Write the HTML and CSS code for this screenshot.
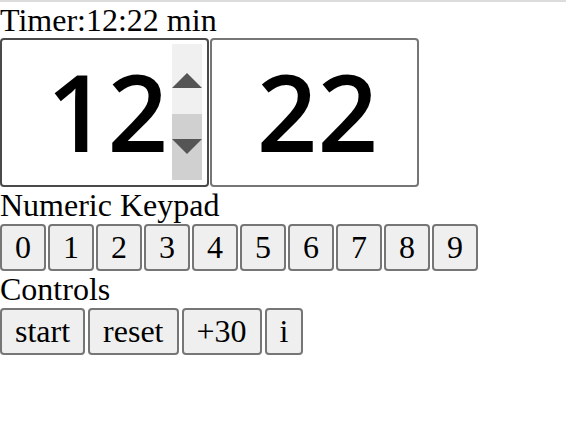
FILE: index.html
```html
<!DOCTYPE html>
<html lang="en">
<head>
<meta charset="utf-8">
<title>Timer</title>
<link rel="stylesheet" href="styles.css">
</head>
<body>
<div class="topline"></div>
<div class="label timer-label">Timer:12:22 min</div>
<div class="fields">
  <div class="field focused">
    <input class="value" type="text" value="12" aria-label="minutes">
    <div class="spin">
      <div class="spin-half up"><span class="tri-up"></span></div>
      <div class="spin-half down"><span class="tri-down"></span></div>
    </div>
  </div>
  <div class="field">
    <input class="value" type="text" value="22" aria-label="seconds">
    <div class="spin hidden"></div>
  </div>
</div>
<div class="label">Numeric Keypad</div>
<div class="row">
  <button class="btn">0</button>
  <button class="btn">1</button>
  <button class="btn">2</button>
  <button class="btn">3</button>
  <button class="btn">4</button>
  <button class="btn">5</button>
  <button class="btn">6</button>
  <button class="btn">7</button>
  <button class="btn">8</button>
  <button class="btn">9</button>
</div>
<div class="label">Controls</div>
<div class="row controls">
  <button class="btn">start</button>
  <button class="btn">reset</button>
  <button class="btn">+30</button>
  <button class="btn">i</button>
</div>
</body>
</html>
```
FILE: styles.css
```css
html, body {
  margin: 0;
  padding: 0;
  background: #ffffff;
}
body {
  font-family: "Liberation Serif", "Times New Roman", serif;
  font-size: 32px;
  color: #000;
}
.topline {
  height: 2px;
  background: #dcdcdc;
}
.label {
  height: 37px;
  line-height: 37px;
  white-space: nowrap;
}
.timer-label {
  height: 36px;
  line-height: 36px;
}
.fields {
  display: flex;
  gap: 1px;
}
.field {
  box-sizing: border-box;
  width: 209px;
  height: 149px;
  border: 2px solid #767676;
  border-radius: 4px;
  display: flex;
  align-items: stretch;
  padding: 4px 5px 5px 0;
  background: #fff;
}
.field.focused {
  border-color: #4a4a4a;
}
.value {
  flex: 1;
  min-width: 0;
  border: 0;
  outline: none;
  padding: 0 4px 0 0;
  margin: 0;
  background: transparent;
  font-family: "Open Sans", "Liberation Sans", sans-serif;
  font-weight: 600;
  font-size: 106px;
  line-height: 134px;
  height: 134px;
  text-align: right;
  color: #000;
}
.spin {
  width: 30px;
  display: flex;
  flex-direction: column;
}
.spin.hidden {
  visibility: hidden;
}
.spin-half {
  flex: 1;
  display: flex;
  justify-content: center;
}
.spin-half.up {
  background: #f0f0f0;
  align-items: flex-start;
  padding-top: 29px;
}
.spin-half.down {
  background: #d0d0d0;
  align-items: flex-start;
  padding-top: 25px;
}
.tri-up {
  width: 0;
  height: 0;
  border-left: 15px solid transparent;
  border-right: 15px solid transparent;
  border-bottom: 15px solid #555;
}
.tri-down {
  width: 0;
  height: 0;
  border-left: 15px solid transparent;
  border-right: 15px solid transparent;
  border-top: 15px solid #555;
}
.row {
  display: flex;
  gap: 2px;
}
.controls {
  gap: 3px;
}
.btn {
  box-sizing: border-box;
  height: 47px;
  padding: 0 13px;
  margin: 0;
  font-family: "Liberation Serif", "Times New Roman", serif;
  font-size: 32px;
  line-height: 43px;
  color: #000;
  background: #efefef;
  border: 2px solid #767676;
  border-radius: 4px;
}
```
